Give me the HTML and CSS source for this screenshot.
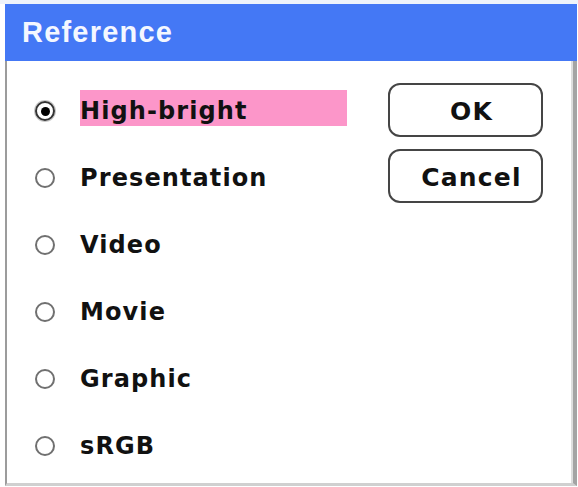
FILE: index.html
```html
<!DOCTYPE html>
<html lang="en">
<head>
<meta charset="utf-8">
<title>Reference</title>
<link rel="stylesheet" href="styles.css">
</head>
<body>
  <div class="dialog">
    <div class="title-bar">Reference</div>
    <div class="dialog-body">
      <ul class="options">
        <li class="option selected"><span class="radio"></span><span class="label">High-bright</span></li>
        <li class="option"><span class="radio"></span><span class="label">Presentation</span></li>
        <li class="option"><span class="radio"></span><span class="label">Video</span></li>
        <li class="option"><span class="radio"></span><span class="label">Movie</span></li>
        <li class="option"><span class="radio"></span><span class="label">Graphic</span></li>
        <li class="option"><span class="radio"></span><span class="label">sRGB</span></li>
      </ul>
      <div class="actions">
        <button class="btn" type="button">OK</button>
        <button class="btn" type="button">Cancel</button>
      </div>
    </div>
  </div>
</body>
</html>
```

FILE: styles.css
```css
html, body {
  margin: 0;
  padding: 0;
  background: #ffffff;
}

body {
  padding-top: 4px;
  background: linear-gradient(#eef3fb 0, #eef3fb 4px, #ffffff 4px);
  font-family: "DejaVu Sans", sans-serif;
  color: #111;
}

.dialog {
  margin-left: 5px;
  width: 572px;
}

.title-bar {
  height: 57px;
  box-sizing: border-box;
  background: #4478f5;
  color: #f4f7ff;
  font-family: "Liberation Sans", Arial, sans-serif;
  font-weight: bold;
  font-size: 29px;
  letter-spacing: 1.2px;
  line-height: 57px;
  padding-left: 17px;
}

.dialog-body {
  height: 425px;
  box-sizing: border-box;
  border-left: 2px solid #9c9c9c;
  border-right: 4px solid #a4a4a4;
  border-bottom: 3px solid #d0d0d0;
  box-shadow: inset -2px 0 0 #dedede;
  display: flex;
  align-items: flex-start;
}

.options {
  list-style: none;
  margin: 0;
  padding: 29px 0 0 28px;
  display: flex;
  flex-direction: column;
  gap: 31px;
}

.option {
  display: flex;
  align-items: flex-start;
  height: 36px;
  gap: 25px;
}

.radio {
  width: 20px;
  height: 20px;
  margin-top: 11px;
  box-sizing: border-box;
  border: 2.5px solid #707070;
  border-radius: 50%;
  flex: none;
  display: flex;
  align-items: center;
  justify-content: center;
}

.selected .radio {
  border-color: #333;
  box-shadow: 0 0 0 1px #c8c8c8;
}

.selected .radio::after {
  content: "";
  width: 9px;
  height: 9px;
  border-radius: 50%;
  background: #000;
}

.label {
  width: 267px;
  height: 36px;
  box-sizing: border-box;
  padding-top: 6px;
  font-weight: bold;
  font-size: 24px;
  line-height: 30px;
  letter-spacing: 1.1px;
  white-space: nowrap;
}

.selected .label {
  background: #fc96c9;
}

.actions {
  margin-left: 41px;
  padding-top: 22px;
  display: flex;
  flex-direction: column;
  gap: 12px;
}

.btn {
  width: 155px;
  height: 54px;
  box-sizing: border-box;
  border: 2.5px solid #454545;
  border-radius: 12px;
  background: #ffffff;
  padding: 2px 0 0 12px;
  font-family: "DejaVu Sans", sans-serif;
  font-weight: bold;
  font-size: 25px;
  letter-spacing: 1.2px;
  color: #111;
}
```
